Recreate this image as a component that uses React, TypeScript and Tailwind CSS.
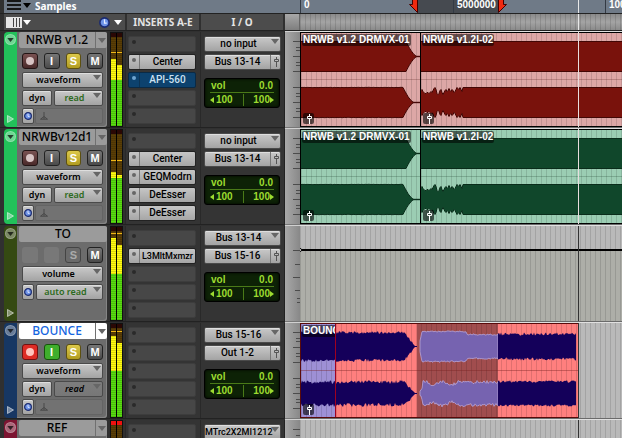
import { ReactNode } from 'react';
import clsx from 'clsx';

type Meter = { left: number; right: number; green: number; peak: number; clip?: boolean };

type Track = {
    name: string;
    color: string;
    view: string;
    automation: string;
    kind: 'audio' | 'aux';
    selected?: boolean;
    armed?: boolean;
    inserts: (string | null)[];
    activeInsert?: number;
    input: string;
    output: string;
    meter: Meter;
    lane: 'red' | 'green' | 'volume' | 'bounce' | 'empty';
};

const tracks: Track[] = [
    {
        name: 'NRWB v1.2',
        color: 'bg-[#22c15a]',
        view: 'waveform',
        automation: 'read',
        kind: 'audio',
        inserts: [null, 'Center', 'API-560', null, null],
        activeInsert: 2,
        input: 'no input',
        output: 'Bus 13-14',
        meter: { left: 26, right: 32, green: 47, peak: 19 },
        lane: 'red',
    },
    {
        name: 'NRWBv12d1',
        color: 'bg-[#22c15a]',
        view: 'waveform',
        automation: 'read',
        kind: 'audio',
        inserts: [null, 'Center', 'GEQModrn', 'DeEsser', 'DeEsser'],
        input: 'no input',
        output: 'Bus 13-14',
        meter: { left: 42, right: 45, green: 48, peak: 30 },
        lane: 'green',
    },
    {
        name: 'TO',
        color: 'bg-[#354a12]',
        view: 'volume',
        automation: 'auto read',
        kind: 'aux',
        inserts: [null, 'L3MltMxmzr', null, null, null],
        input: 'Bus 13-14',
        output: 'Bus 15-16',
        meter: { left: 11, right: 18, green: 47, peak: 6 },
        lane: 'volume',
    },
    {
        name: 'BOUNCE',
        color: 'bg-[#173763]',
        view: 'waveform',
        automation: 'read',
        kind: 'audio',
        selected: true,
        armed: true,
        inserts: [null, null, null, null, null],
        input: 'Bus 15-16',
        output: 'Out 1-2',
        meter: { left: 12, right: 19, green: 47, peak: 7 },
        lane: 'bounce',
    },
    {
        name: 'REF',
        color: 'bg-[#7c1431]',
        view: 'waveform',
        automation: 'read',
        kind: 'audio',
        inserts: [null, null, null, null, null],
        input: 'MTrc2X2MI1212',
        output: 'Out 1-2',
        meter: { left: 40, right: 40, green: 50, peak: 20, clip: true },
        lane: 'empty',
    },
];

const control =
    'rounded-[2px] border border-[#4a4a4a] bg-linear-to-b from-[#c9c9c9] to-[#a3a3a3] text-black shadow-[inset_0_1px_0_#dedede]';
const gridLines = 'bg-[repeating-linear-gradient(90deg,rgba(0,0,0,0.12)_0px_1px,transparent_1px_5px)]';

// repeatable noise in 0..1
function noise(n: number) {
    const v = Math.sin(n * 127.1) * 43758.5453;
    return v - Math.floor(v);
}

function wavePath(from: number, to: number, center: number, amp: (x: number) => number, jitter: number) {
    const top: string[] = [];
    const bottom: string[] = [];
    for (let x = from; x <= to; x++) {
        const a = amp(x);
        const up = a > 3 ? a + (noise(x + center) - 0.5) * jitter : a;
        const down = a > 3 ? a + (noise(x * 3 + center) - 0.5) * jitter : a;
        top.push(`${x} ${(center - up).toFixed(1)}`);
        bottom.unshift(`${x} ${(center + down).toFixed(1)}`);
    }
    return `M${top.join('L')}L${bottom.join('L')}Z`;
}

const fadeFrom = (start: number) => (x: number) =>
    x < start ? 15 : x < start + 10 ? Math.max(0.2, 15 * Math.pow((start + 10 - x) / 11, 1.5)) : 0.2;
const dips = [12, 13, 11, 10, 9, 9, 10, 10, 9, 10, 11, 10, 12, 14, 15, 13, 9, 8, 9, 12, 13, 10, 8, 10, 12, 13, 11, 12, 14, 12, 11, 13, 12, 10, 11, 13, 15, 14, 13, 15, 13, 11];
const introLower = (x: number) => (x < dips.length ? dips[Math.max(x, 0)] : 15);

function Arrow({ className }: { className?: string }) {
    return (
        <svg viewBox="0 0 8 5" className={clsx('pointer-events-none h-[5px] w-2 shrink-0', className)} fill="currentColor">
            <path d="M0 0h8L4 5z" />
        </svg>
    );
}

function Clock({ className }: { className?: string }) {
    return (
        <svg viewBox="0 0 10 10" className={className}>
            <circle cx="5" cy="5" r="4.2" fill="#6d92e6" stroke="#1a2a70" strokeWidth="1.5" />
            <path d="M5 2V5.5H7" fill="none" stroke="#e8eeff" strokeWidth="1.1" />
        </svg>
    );
}

function Fader({ className }: { className?: string }) {
    return (
        <svg viewBox="0 0 8 10" className={clsx('h-2.5 w-2 shrink-0', className)} fill="none" stroke="currentColor">
            <path d="M4.5 0V2M4.5 5V10M2.5 2.5H6.5V4.5H2.5Z" />
        </svg>
    );
}

type DropdownProps = { label: string; value: string; className?: string; textClass?: string };

function Dropdown({ label, value, className, textClass }: DropdownProps) {
    return (
        <div className={clsx('relative h-4', className)}>
            <select
                aria-label={label}
                defaultValue={value}
                className={clsx('block h-4 w-full appearance-none text-center leading-[14px]', control, textClass)}
            >
                <option>{value}</option>
            </select>
            <Arrow className="absolute top-[3px] right-[2px] text-[#666]" />
        </div>
    );
}

function TrackButton({ label, className, children }: { label: string; className: string; children?: ReactNode }) {
    return (
        <button
            aria-label={label}
            className={clsx(
                'flex size-4 items-center justify-center rounded-[3px] border font-["Liberation_Sans",sans-serif] text-[11px] leading-none font-bold',
                className
            )}
        >
            {children}
        </button>
    );
}

const darkButton = 'border-[#222] bg-linear-to-b from-[#777] to-[#4a4a4a] text-white';

function TrackControls({ track }: { track: Track }) {
    const { armed, selected } = track;
    const aux = track.kind === 'aux';
    const clockButton = (
        <button aria-label="Timebase" className={clsx('flex h-4 w-3 items-center justify-center', control)}>
            <Clock className="size-2 shrink-0" />
        </button>
    );
    return (
        <div className="flex w-[90px] flex-col rounded-r-[3px] bg-[#6c6c6c] pb-[3px] font-['Noto_Sans',sans-serif] shadow-[inset_-1px_-1px_0_#858585]">
            <div className={clsx('ml-[2px] flex h-4 rounded-[2px]', selected ? 'bg-white' : 'bg-[#9b9b9b]')}>
                <button className={clsx('flex-1 text-[12px] leading-4 font-medium', selected ? 'text-[#1565e0]' : 'text-black')}>
                    {track.name}
                </button>
                {!aux && (
                    <span className="flex w-3 items-center justify-center border-l border-[#707070]">
                        <Arrow className="text-[#666]" />
                    </span>
                )}
            </div>
            <div className="mt-[5px] flex flex-col pr-[4px] pl-[5px]">
                <div className="mb-[3px] flex gap-[6px]">
                    {aux ? (
                        <>
                            <span className="size-4 rounded-[3px] bg-[#787878]" />
                            <span className="size-4 rounded-[3px] bg-[#787878]" />
                        </>
                    ) : (
                        <>
                            <TrackButton
                                label="Record"
                                className={armed ? 'border-[#701010] bg-[#dd2b24]' : 'border-[#221414] bg-linear-to-b from-[#7a5252] to-[#4a2a2a]'}
                            >
                                <span className={clsx('size-2 rounded-full', armed ? 'bg-[#ffc4bd]' : 'bg-[#d8c4c4]')} />
                            </TrackButton>
                            <TrackButton label="Input" className={armed ? 'border-[#17520c] bg-[#3fae2c] text-white' : darkButton}>
                                I
                            </TrackButton>
                        </>
                    )}
                    <TrackButton
                        label="Solo"
                        className={aux ? 'border-[#444] bg-[#6a6a6a] text-[#aaa]' : 'border-[#5d5010] bg-linear-to-b from-[#dcc94a] to-[#b19c20] text-white'}
                    >
                        S
                    </TrackButton>
                    <TrackButton label="Mute" className={darkButton}>
                        M
                    </TrackButton>
                </div>
                <Dropdown label="Track view" value={track.view} className="mb-[2px]" textClass="pr-2 text-[9px] font-semibold" />
                <div className="mb-[2px] flex gap-[2px]">
                    {aux ? clockButton : <button className={clsx('h-4 w-[30px] text-[9px] leading-[14px] font-semibold', control)}>dyn</button>}
                    <Dropdown
                        label="Automation mode"
                        value={track.automation}
                        className="flex-1"
                        textClass={clsx(
                            'pr-2 text-[9px] font-semibold',
                            armed ? 'from-[#7d7d7d]! to-[#777]! italic shadow-none!' : 'text-[#2c6a20]!'
                        )}
                    />
                </div>
                {!aux && (
                    <div className="flex gap-[1px]">
                        {clockButton}
                        <div className="flex flex-1 items-center rounded-[2px] border border-[#646464] bg-[#727272] pl-1">
                            <svg viewBox="0 0 8 8" className="size-2" fill="none" stroke="#484848">
                                <path d="M4 0V7M0.5 7.2H7.5L4 4.5Z" />
                            </svg>
                        </div>
                    </div>
                )}
            </div>
        </div>
    );
}

function MeterBar({ level, meter }: { level: number; meter: Meter }) {
    return (
        <div className="relative flex flex-1 flex-col bg-[#5a3e06]">
            <div className={clsx('h-1', meter.clip ? 'bg-[#f01010]' : 'bg-[#2a0805]')} />
            <div style={{ height: level - 4 }} />
            <div className="bg-[#fffb10]" style={{ height: meter.green - level }} />
            <div className="flex-1 bg-[#58dc10]" />
            <div className="absolute inset-x-0 top-1 bottom-0 bg-[repeating-linear-gradient(180deg,rgba(0,0,0,0.14)_0px_1px,transparent_1px_2px)]" />
            <div className="absolute inset-x-0 h-px bg-[#f0b818]" style={{ top: meter.peak }} />
        </div>
    );
}

function Inserts({ track }: { track: Track }) {
    return (
        <div className="flex w-[76px] flex-col gap-[2px] border-x border-[#292929] bg-[#343434] pt-1 pr-1 pl-[2px]">
            {track.inserts.map((name, i) =>
                name ? (
                    <button
                        key={i}
                        className={clsx(
                            "flex h-4 items-stretch rounded-[2px] border font-['Roboto',sans-serif] leading-[14px] font-medium whitespace-nowrap",
                            name.length > 9 ? 'text-[9px]' : 'text-[10px]',
                            i === track.activeInsert
                                ? 'border-[#0b2a45] bg-[#0d426e] text-[#cfe2f2]'
                                : 'border-[#222] bg-linear-to-b from-[#c6c6c6] to-[#a6a6a6] text-black'
                        )}
                    >
                        <span className={clsx('w-[11px] shrink-0 border-r pt-[3px] pl-[3px]', i === track.activeInsert ? 'border-[#0b3355]' : 'border-[#777]')}>
                            <span className={clsx('block size-1 rounded-full', i === track.activeInsert ? 'bg-[#6fa5d0]' : 'bg-[#666]')} />
                        </span>
                        <span className="flex flex-1 justify-center">{name}</span>
                    </button>
                ) : (
                    <button key={i} aria-label={`Insert ${i + 1}`} className="h-4 rounded-[2px] border border-[#3d3d3d] bg-[#474747] pl-[3px]">
                        <span className="mb-1 block size-1 rounded-full bg-[#2a2a2a]" />
                    </button>
                )
            )}
        </div>
    );
}

function InputOutput({ track }: { track: Track }) {
    const long = track.input.length > 10;
    return (
        <div className="flex w-[84px] flex-col border-r border-[#222] bg-[#343434] px-[3px] pt-1 font-['Roboto',sans-serif]">
            <Dropdown
                label="Input"
                value={track.input}
                className="mb-[2px]"
                textClass={clsx('font-medium', long ? 'text-left text-[9px]' : 'pr-2 text-[10px]')}
            />
            <button className={clsx('flex h-4 text-[10px] leading-[14px] font-medium', control)}>
                <span className="flex-1">{track.output}</span>
                <span className="flex h-full w-[10px] items-center justify-center border-l border-[#777] text-[#555]">
                    <Fader />
                </span>
            </button>
            <div className="mt-2 mr-[1px] flex flex-col rounded-[3px] border border-black bg-[#0d2206] px-[5px] py-[1px] font-['Liberation_Sans',sans-serif] text-[10px] leading-3 font-bold text-[#9ddc30] shadow-[inset_0_0_3px_#000]">
                <div className="flex justify-between border-b border-[#4a7a18] px-[1px]">
                    <span>vol</span>
                    <span>0.0</span>
                </div>
                <div className="flex items-center justify-between pt-[1px]">
                    <span className="flex items-center gap-[2px]">
                        <svg viewBox="0 0 4 6" className="h-1.5 w-1" fill="currentColor">
                            <path d="M4 0V6L0 3z" />
                        </svg>
                        100
                    </span>
                    <span className="h-3 w-px bg-[#4a7a18]" />
                    <span className="flex items-center">
                        100
                        <svg viewBox="0 0 4 6" className="h-1.5 w-1" fill="currentColor">
                            <path d="M0 0V6L4 3z" />
                        </svg>
                    </span>
                </div>
            </div>
        </div>
    );
}

const audioTicks = [
    [10, 7], [16, 4], [19, 4], [25, 7], [31, 4], [34, 4], [40, 7],
    [56, 7], [62, 4], [65, 4], [71, 7], [77, 4], [80, 4], [86, 7],
];
const volumeTicks = [[25, 7], [39, 5], [52, 7], [65, 5], [73, 3], [77, 3]];

function Scale({ lane }: { lane: Track['lane'] }) {
    const ticks = lane === 'volume' ? volumeTicks : audioTicks;
    return (
        <div className="w-[15px] border-t border-b border-t-[#d0d0d0] border-b-[#777] bg-linear-to-r from-[#a9a9a9] to-[#888]">
            <svg viewBox="0 0 15 95" className="h-[95px] w-[15px]" stroke="#4c4c4c">
                <path d={ticks.map(([y, w]) => `M${15 - w} ${y - 0.5}h${w}`).join('')} />
            </svg>
        </div>
    );
}

function ClipLabel({ children }: { children: string }) {
    return (
        <span className="absolute top-[1px] left-[1px] rounded-[2px] bg-black/55 px-[1px] font-['Liberation_Sans',sans-serif] text-[10px] leading-3 font-bold whitespace-nowrap text-white">
            {children}
        </span>
    );
}

function ClipGain() {
    return (
        <span className="absolute bottom-[2px] left-[2px] flex size-[11px] items-center justify-center rounded-[2px] bg-black/60 text-white">
            <Fader />
        </span>
    );
}

function StereoClips({ green }: { green?: boolean }) {
    const bg = green ? 'bg-[#9bcdb3]' : 'bg-[#dda7a6]';
    const wave = green ? 'fill-[#10472b] stroke-[#0a2d1b]' : 'fill-[#79120c] stroke-[#420705]';
    return (
        <>
            <div className={clsx('absolute inset-y-0 left-0 w-[121px] overflow-hidden border border-black', bg)}>
                <div className={clsx('absolute inset-0', gridLines)} />
                <svg className={clsx('absolute inset-0 h-full w-full', wave)}>
                    <path d={wavePath(-1, 121, 23.5, fadeFrom(106), 0)} />
                    <path d={wavePath(-1, 121, 69.5, fadeFrom(103), 0.5)} />
                    <path d="M0 46.5H121" strokeOpacity="0.22" />
                </svg>
                <ClipLabel>NRWB v1.2 DRMVX-01</ClipLabel>
                <ClipGain />
            </div>
            <div className={clsx('absolute inset-y-0 right-0 left-[121px] overflow-hidden border-y border-black', bg)}>
                <div className={clsx('absolute inset-0', gridLines)} />
                <svg className={clsx('absolute inset-0 h-full w-full', wave)}>
                    <path d={wavePath(-1, 2400, 23.5, () => 15, 0)} />
                    <path d={wavePath(-1, 2400, 69.5, introLower, 0)} />
                    <path d="M0 46.5H2400" strokeOpacity="0.22" />
                </svg>
                <ClipLabel>NRWB v1.2I-02</ClipLabel>
                <ClipGain />
            </div>
        </>
    );
}

function BounceClip() {
    const fadeTop = (x: number) => (x < 103 ? 14 : Math.max(0.5, 14 - (x - 103) * 1.25));
    const fadeBottom = (x: number) => (x < 103 ? 11.5 : Math.max(0.5, 11.5 - (x - 103)));
    const selTop = (x: number) => (x < 121 ? (x - 118) * 5 : x < 166 ? 15 : 12);
    const selBottom = (x: number) => (x < 122 ? (x - 118) * 2 : x < 163 ? 8 + 4 * Math.abs(Math.sin(x / 6)) : 11.5);
    return (
        <div className="absolute inset-y-0 left-0 w-[279px] overflow-hidden border border-[#5a0a0a] bg-[#ff7f7e]">
            <div className="absolute inset-y-0 left-0 w-[35px] bg-[#9e90d5]" />
            <div className="absolute inset-y-0 left-[116px] w-[81px] bg-[#a14d4e]" />
            <div className={clsx('absolute inset-0', gridLines)} />
            <svg className="absolute inset-0 h-full w-full" fill="#14005a">
                <path d="M0 46.5H279" stroke="#7a2020" strokeOpacity="0.4" />
                <path d={wavePath(0, 116, 22.5, fadeTop, 3)} />
                <path d={wavePath(0, 116, 69.5, fadeBottom, 4)} />
                <path d={wavePath(119, 197, 22.5, selTop, 1.5)} fill="#7663b0" stroke="#b7a5d8" strokeWidth="0.8" />
                <path d={wavePath(119, 197, 69.5, selBottom, 3)} fill="#7663b0" stroke="#b7a5d8" strokeWidth="0.8" />
                <path d={wavePath(197, 275, 22.5, () => 12.5, 3)} />
                <path d={wavePath(197, 275, 69.5, () => 12, 2.5)} />
                <path d="M34.5 0V95" stroke="#a00020" />
            </svg>
            <div className="absolute inset-y-0 left-0 w-[34px] overflow-hidden">
                <ClipLabel>BOUNCE</ClipLabel>
            </div>
            <ClipGain />
        </div>
    );
}

function Lane({ lane }: { lane: Track['lane'] }) {
    const clipped = lane === 'red' || lane === 'green';
    return (
        <div className="relative min-w-0 flex-1 overflow-hidden border-t border-b border-t-[#e0e0e0] border-b-[#6a6a6a] bg-[#b9b9b9]">
            {lane === 'volume' && <div className="absolute inset-x-0 top-6 bottom-0 bg-[#adaea8]" />}
            <div className={clsx('absolute inset-0', gridLines)} />
            {clipped && <StereoClips green={lane === 'green'} />}
            {lane === 'bounce' && <BounceClip />}
            {lane === 'volume' && (
                <>
                    <div className="absolute inset-x-0 top-[23px] h-[2px] bg-black" />
                    <div className="absolute top-[22px] -left-[2px] size-1 rounded-full border border-black bg-white" />
                </>
            )}
            <div className={clsx('absolute inset-y-0 left-[278px] w-px', clipped ? 'bg-[#e8dede]' : 'bg-[#333]')} />
        </div>
    );
}

function TrackRow({ track }: { track: Track }) {
    return (
        <section aria-label={track.name} className="flex shrink-0">
            <div className="flex border-b border-[#222] bg-[#303030] pt-px pl-1">
                <div className={clsx('flex w-[13px] flex-col items-center justify-between rounded-l-[4px] pt-[2px] pb-1', track.color)}>
                    <button aria-label="Track options" className="flex size-[11px] items-center justify-center rounded-full border border-white/20 bg-white/35 text-black/70">
                        <Arrow className="h-1! w-[7px]!" />
                    </button>
                    <svg viewBox="0 0 7 8" className="h-2 w-[7px]" fill="#ffffff66" stroke="#ffffff88">
                        <path d="M0.5 0.5V7.5L6.5 4z" />
                    </svg>
                </div>
                <TrackControls track={track} />
                <div className="ml-[3px] flex w-[13px] gap-px border border-[#111] bg-black">
                    <MeterBar level={track.meter.left} meter={track.meter} />
                    <MeterBar level={track.meter.right} meter={track.meter} />
                </div>
                <div className="ml-[2px] flex">
                    <Inserts track={track} />
                    <InputOutput track={track} />
                </div>
            </div>
            <Scale lane={track.lane} />
            <Lane lane={track.lane} />
        </section>
    );
}

function RulerMark({ className, children }: { className: string; children: string }) {
    return <span className={clsx('absolute top-0 h-full border-l border-[#333a44] pl-[3px]', className)}>{children}</span>;
}

function Header() {
    return (
        <header className="shrink-0 font-['Noto_Sans',sans-serif] text-[10px] font-bold text-white">
            <div className="flex h-[14px] border-b border-[#222] bg-[#303030] pl-1">
                <div className="flex w-[296px] items-start bg-[#6f7a87] pl-[3px]">
                    <svg viewBox="0 0 14 10" className="h-2.5 w-[14px]" fill="#161616">
                        <path d="M0 0h14v2H0zM0 4h14v2H0zM0 8h14v2H0z" />
                    </svg>
                    <Arrow className="mt-[3px] ml-[2px] text-black" />
                    <span className="ml-1 leading-3">Samples</span>
                </div>
                <div className="relative min-w-0 flex-1 overflow-hidden bg-[#6f7a87] font-['Liberation_Sans',sans-serif] leading-[10px]">
                    <div className="absolute inset-y-0 left-[117px] w-[81px] bg-[#464a50]" />
                    <RulerMark className="left-0">0</RulerMark>
                    <RulerMark className="left-[153px]">5000000</RulerMark>
                    <RulerMark className="left-[305px]">10000000</RulerMark>
                    <svg viewBox="0 0 9 13" className="absolute top-0 left-[109px] h-[13px] w-[9px]" fill="#f02a10" stroke="#400">
                        <path d="M3.5 -1V4.5H0.5L8.5 12.5V-1z" />
                    </svg>
                    <svg viewBox="0 0 9 13" className="absolute top-0 left-[198px] h-[13px] w-[9px]" fill="#f02a10" stroke="#400">
                        <path d="M5.5 -1V4.5H8.5L0.5 12.5V-1z" />
                    </svg>
                    <div className="absolute inset-y-0 left-[278px] w-px bg-[#e8e8e8]" />
                </div>
            </div>
            <div className="flex h-[17px] border-b border-[#222] bg-[#303030] pl-1">
                <div className="flex w-[121px] items-center bg-[#4c4c4c] pl-[2px]">
                    <svg viewBox="0 0 16 11" className="h-[11px] w-4">
                        <path d="M0 0h16v11H0z" fill="#e6e6e6" />
                        <path d="M7.5 1v9M10.5 1v9M13.5 1v9" stroke="#444" />
                    </svg>
                    <Arrow className="ml-[1px]" />
                    <Clock className="ml-[68px] size-[11px]" />
                    <Arrow className="ml-1" />
                </div>
                <div className="w-[76px] border-x-2 border-[#303030] bg-[#4c4c4c] text-center leading-4 text-[#e4e4e4]">INSERTS A-E</div>
                <div className="w-[84px] border-r-2 border-[#303030] bg-[#4c4c4c] text-center leading-4 text-[#e4e4e4]">I / O</div>
                <div className="w-[15px] border-r border-[#666] bg-linear-to-b from-[#a8a8a8] to-[#7e7e7e]" />
                <div className="relative flex-1 bg-linear-to-b from-[#8a8a8a] via-[#a4a4a4] to-[#8a8a8a]">
                    <div className={clsx('absolute inset-0', gridLines)} />
                    <div className="absolute inset-y-0 left-[278px] w-px bg-[#e8e8e8]" />
                </div>
            </div>
        </header>
    );
}

export default function App() {
    return (
        <main className="flex h-screen flex-col overflow-hidden bg-[#303030]">
            <Header />
            {tracks.map(track => (
                <TrackRow key={track.name} track={track} />
            ))}
        </main>
    );
}
